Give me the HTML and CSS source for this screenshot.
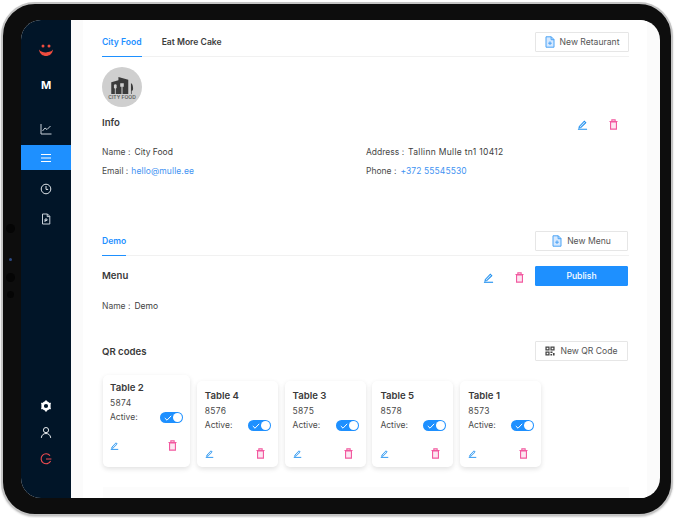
FILE: index.html
```html
<!DOCTYPE html>
<html lang="en">
<head>
    <meta charset="UTF-8" />
    <title>Restaurants</title>
    <link rel="stylesheet" href="styles.css">
</head>
<body>
<svg class="defs" width="0" height="0">
    <symbol id="i-edit" viewBox="0 0 12 12">
        <path d="M2.5 8.2 L8 2.4 L9.6 4 L4.1 9.4 L2.2 9.9 Z" fill="currentColor" fill-opacity=".18" stroke="currentColor" stroke-width="1.1"/>
        <path d="M1 11.2 H11" stroke="currentColor" stroke-width="1.2"/>
    </symbol>
    <symbol id="i-trash" viewBox="0 0 12 12">
        <path d="M2.8 3.2 H9.2 V11 H2.8 Z" fill="currentColor" fill-opacity=".15" stroke="currentColor" stroke-width="1.2"/>
        <path d="M1.6 2.8 H10.4 M4.2 2.6 V1 H7.8 V2.6" fill="none" stroke="currentColor" stroke-width="1.2"/>
    </symbol>
    <symbol id="i-file" viewBox="0 0 10 12">
        <path d="M1 .8 H6.3 L9 3.5 V11.2 H1 Z" fill="#d6e9ff" stroke="currentColor" stroke-width="1"/>
        <path d="M6.1 .8 V3.7 H9 M5 5.4 V9 M3.2 7.2 H6.8" fill="none" stroke="currentColor" stroke-width="1"/>
    </symbol>
</svg>

<div class="tablet">
    <i class="cam cam-a"></i>
    <i class="cam cam-b"></i>
    <i class="cam cam-c"></i>
    <i class="cam cam-d"></i>
    <div class="screen">
        <aside class="sidebar">
            <svg class="logo" width="16" height="14" viewBox="0 0 16 14">
                <circle cx="5" cy="2" r="1.5" fill="#ef4c3f"/>
                <circle cx="11" cy="2" r="1.5" fill="#ef4c3f"/>
                <path d="M1 5.5 C1.5 10 5 12 8 12 C11 12 14.5 10 15 5.5 C13 8 10 8.6 8 8.4 C6 8.6 3 8 1 5.5 Z" fill="#ef4c3f"/>
                <path d="M8.5 8.5 C10 8 12 7.5 12.5 8 C12.5 10 10 11.8 8.5 11 Z" fill="#ef4c3f"/>
            </svg>
            <div class="initial">M</div>
            <nav class="nav">
                <a class="nav-item">
                    <svg width="12" height="12" viewBox="0 0 12 12" fill="none" stroke="#c9d1d9" stroke-width="1">
                        <path d="M1 1 V11 H11.5"/><path d="M2.5 8 L5 5 L7 6.5 L10.5 3"/>
                    </svg>
                </a>
                <a class="nav-item active">
                    <svg width="12" height="12" viewBox="0 0 12 12" fill="none" stroke="#fff" stroke-width="1">
                        <path d="M1 2.5 H11 M1 6 H11 M1 9.5 H11"/>
                    </svg>
                </a>
                <a class="nav-item">
                    <svg width="12" height="12" viewBox="0 0 12 12" fill="none" stroke="#dfe4e8" stroke-width="1">
                        <circle cx="6" cy="6" r="4.8"/><path d="M6 3 V6.4 H8.2"/>
                    </svg>
                </a>
                <a class="nav-item">
                    <svg width="12" height="12" viewBox="0 0 12 12" fill="none" stroke="#c9d1d9" stroke-width="1">
                        <path d="M2.5 1 H7.5 L9.8 3.3 V11 H2.5 Z"/><path d="M7.2 1 V3.6 H9.8 M5 9 V6 H7 V7.5 H5"/>
                    </svg>
                </a>
            </nav>
            <div class="side-bottom">
                <svg width="12" height="12" viewBox="0 0 12 12">
                    <circle cx="6" cy="6" r="3.4" fill="none" stroke="#fff" stroke-width="2.6"/>
                    <path d="M6 .6 V2.4 M6 9.6 V11.4 M1.3 3.3 L2.9 4.2 M9.1 7.8 L10.7 8.7 M1.3 8.7 L2.9 7.8 M9.1 4.2 L10.7 3.3" stroke="#fff" stroke-width="1.8"/>
                </svg>
                <svg width="12" height="12" viewBox="0 0 12 12" fill="none" stroke="#e8ecef" stroke-width="1">
                    <circle cx="6" cy="3.1" r="2.6"/><path d="M1.3 10.9 C1.6 7.9 3.6 6.5 6 6.5 C8.4 6.5 10.4 7.9 10.7 10.9"/>
                </svg>
                <svg width="12" height="12" viewBox="0 0 12 12" fill="none" stroke="#f04c50" stroke-width="1.1">
                    <path d="M10 2.6 A5 5 0 1 0 10.6 8"/><path d="M6 6 H11.4"/>
                </svg>
            </div>
        </aside>

        <main class="main">
            <div class="panel">
                <div class="tabs">
                    <div class="tab-list">
                        <a class="tab current">City Food</a>
                        <a class="tab">Eat More Cake</a>
                    </div>
                    <button class="btn btn-wide"><svg class="btn-ico"><use href="#i-file"/></svg>New Retaurant</button>
                </div>

                <div class="avatar">
                    <svg width="24" height="17" viewBox="0 0 26 19">
                        <path d="M1 19 V6 L9 3.5 V0 L20 3 V19 Z" fill="#3b3b3b"/>
                        <path d="M23 19 V7 C24.6 7 25.4 10 25.4 13 C25.4 15 24.4 15.5 23.8 15.5 V19 Z" fill="#3b3b3b"/>
                        <rect x="4" y="8" width="3" height="5" rx="1.5" fill="#cfcfcf"/>
                        <rect x="5" y="12" width="1" height="7" fill="#cfcfcf"/>
                        <path d="M11 7 H15 V11 H13.6 V19 H12.4 V11 H11 Z" fill="#cfcfcf"/>
                    </svg>
                    <span class="avatar-name">CITY FOOD</span>
                </div>

                <div class="head head-info">
                    <h2>Info</h2>
                    <div class="actions actions-info">
                        <svg class="ico edit"><use href="#i-edit"/></svg>
                        <svg class="ico trash"><use href="#i-trash"/></svg>
                    </div>
                </div>

                <div class="info-grid">
                    <p><span class="key">Name :</span><span class="val">City Food</span></p>
                    <p><span class="key">Address :</span><span class="val tight">Tallinn Mulle tn1 10412</span></p>
                    <p><span class="key key-email">Email :</span><a class="link">hello@mulle.ee</a></p>
                    <p><span class="key">Phone :</span><a class="link">+372 55545530</a></p>
                </div>

                <div class="tabs tabs-menu">
                    <div class="tab-list">
                        <a class="tab current">Demo</a>
                    </div>
                    <button class="btn"><svg class="btn-ico"><use href="#i-file"/></svg>New Menu</button>
                </div>

                <div class="head head-menu">
                    <h2>Menu</h2>
                    <div class="menu-right">
                        <div class="actions actions-menu">
                            <svg class="ico edit"><use href="#i-edit"/></svg>
                            <svg class="ico trash"><use href="#i-trash"/></svg>
                        </div>
                        <button class="btn btn-primary">Publish</button>
                    </div>
                </div>

                <p class="menu-name"><span class="key">Name :</span><span class="val">Demo</span></p>

                <div class="head head-qr">
                    <h2>QR codes</h2>
                    <button class="btn">
                        <svg class="btn-ico qr" viewBox="0 0 12 12" fill="#444">
                            <path d="M.5 .5 H5.5 V5.5 H.5 Z M2 2 V4 H4 V2 Z M6.5 .5 H11.5 V5.5 H6.5 Z M8 2 V4 H10 V2 Z M.5 6.5 H5.5 V11.5 H.5 Z M2 8 V10 H4 V8 Z" fill-rule="evenodd"/>
                            <path d="M6.5 6.5 H9 V8.5 H6.5 Z M9.5 8.5 H11.5 V11.5 H9.5 Z M6.5 9.5 H8.5 V11.5 H6.5 Z"/>
                        </svg>
                        New QR Code
                    </button>
                </div>

                <div class="cards">
                    <div class="card card-first">
                        <h3>Table 2</h3>
                        <div class="code">5874</div>
                        <div class="active-row"><span>Active:</span><span class="switch"><svg width="8" height="6" viewBox="0 0 8 6"><path d="M.8 3 L3 5.2 L7.2 .8" fill="none" stroke="#fff"/></svg><i></i></span></div>
                        <div class="card-actions">
                            <svg class="ico-sm edit"><use href="#i-edit"/></svg>
                            <svg class="ico trash"><use href="#i-trash"/></svg>
                        </div>
                    </div>
                    <div class="card">
                        <h3>Table 4</h3>
                        <div class="code">8576</div>
                        <div class="active-row"><span>Active:</span><span class="switch"><svg width="8" height="6" viewBox="0 0 8 6"><path d="M.8 3 L3 5.2 L7.2 .8" fill="none" stroke="#fff"/></svg><i></i></span></div>
                        <div class="card-actions">
                            <svg class="ico-sm edit"><use href="#i-edit"/></svg>
                            <svg class="ico trash"><use href="#i-trash"/></svg>
                        </div>
                    </div>
                    <div class="card">
                        <h3>Table 3</h3>
                        <div class="code">5875</div>
                        <div class="active-row"><span>Active:</span><span class="switch"><svg width="8" height="6" viewBox="0 0 8 6"><path d="M.8 3 L3 5.2 L7.2 .8" fill="none" stroke="#fff"/></svg><i></i></span></div>
                        <div class="card-actions">
                            <svg class="ico-sm edit"><use href="#i-edit"/></svg>
                            <svg class="ico trash"><use href="#i-trash"/></svg>
                        </div>
                    </div>
                    <div class="card">
                        <h3>Table 5</h3>
                        <div class="code">8578</div>
                        <div class="active-row"><span>Active:</span><span class="switch"><svg width="8" height="6" viewBox="0 0 8 6"><path d="M.8 3 L3 5.2 L7.2 .8" fill="none" stroke="#fff"/></svg><i></i></span></div>
                        <div class="card-actions">
                            <svg class="ico-sm edit"><use href="#i-edit"/></svg>
                            <svg class="ico trash"><use href="#i-trash"/></svg>
                        </div>
                    </div>
                    <div class="card">
                        <h3>Table 1</h3>
                        <div class="code">8573</div>
                        <div class="active-row"><span>Active:</span><span class="switch"><svg width="8" height="6" viewBox="0 0 8 6"><path d="M.8 3 L3 5.2 L7.2 .8" fill="none" stroke="#fff"/></svg><i></i></span></div>
                        <div class="card-actions">
                            <svg class="ico-sm edit"><use href="#i-edit"/></svg>
                            <svg class="ico trash"><use href="#i-trash"/></svg>
                        </div>
                    </div>
                </div>

                <div class="next-panel"></div>
            </div>
        </main>
    </div>
</div>
</body>
</html>
```

FILE: styles.css
```css
/* Base */
* {
    box-sizing: border-box;
}
body {
    margin: 0;
    width: 676px;
    height: 518px;
    overflow: hidden;
    background: #fff;
    font-family: Inter, "Noto Sans", sans-serif;
    color: #3d3d3d;
    padding: 2px 3px 2px 1px;
}
.defs {
    position: absolute;
}
h2, h3, p {
    margin: 0;
}

/* Device frame */
.tablet {
    position: relative;
    width: 672px;
    height: 514px;
    border-radius: 34px;
    background: #0d0d0d;
    border: 2px solid #c4c4c4;
    padding: 16px 11px 16px 18px;
    box-shadow: 0 1px 2px rgba(0,0,0,0.2);
}
.cam {
    position: absolute;
    left: 3px;
    width: 9px;
    height: 9px;
    border-radius: 50%;
    background: #050505;
}
.cam-a { top: 220px; }
.cam-b { top: 269px; }
.cam-c { top: 287px; width: 7px; height: 7px; left: 4px; }
.cam-d { top: 254px; width: 3px; height: 3px; left: 6px; background: #2c4a86; }
.screen {
    display: flex;
    height: 100%;
    background: #fbfbfb;
    border-radius: 20px;
    overflow: hidden;
}

/* Sidebar */
.sidebar {
    width: 50px;
    flex: none;
    background: #011528;
    display: flex;
    flex-direction: column;
    align-items: center;
    padding-top: 24px;
    padding-bottom: 33px;
}
.logo {
    display: block;
}
.initial {
    margin-top: 20px;
    font-size: 11px;
    font-weight: 700;
    line-height: 14px;
    color: #fff;
}
.nav {
    width: 100%;
    margin-top: 22px;
    display: flex;
    flex-direction: column;
}
.nav-item {
    height: 30px;
    display: flex;
    align-items: center;
    justify-content: center;
}
.nav-item.active {
    height: 25px;
    margin: 1px 0 4px;
    background: #1e90ff;
}
.side-bottom {
    margin-top: auto;
    display: flex;
    flex-direction: column;
    gap: 14.5px;
}
.side-bottom svg {
    display: block;
}

/* Content */
.main {
    flex: 1;
    padding: 0 13px 0 12px;
    min-width: 0;
}
.panel {
    height: 100%;
    background: #fff;
    padding: 0 18px 0 19px;
    overflow: hidden;
}
.tabs {
    display: flex;
    justify-content: space-between;
    align-items: flex-start;
    height: 37px;
    padding-top: 12px;
    border-bottom: 1px solid #f1f1f1;
}
.tab-list {
    display: flex;
    gap: 20px;
}
.tab {
    height: 25px;
    padding-top: 4px;
    font-size: 8.6px;
    font-weight: 600;
    line-height: 12px;
    color: #3d3d3d;
}
.tab.current {
    color: #1e90ff;
    border-bottom: 1.5px solid #1e90ff;
}
.btn {
    width: 93px;
    height: 20px;
    border: 1px solid #e6e6e6;
    border-radius: 1px;
    background: #fff;
    font: 400 8.6px Inter, sans-serif;
    color: #555;
    display: flex;
    align-items: center;
    justify-content: center;
    gap: 5px;
    padding: 0;
}
.btn-wide {
    width: 94px;
}
.btn-ico {
    width: 10px;
    height: 12px;
    color: #4aa3f5;
}
.btn-ico.qr {
    width: 10px;
    height: 10px;
}
.btn-primary {
    background: #1e90ff;
    border-color: #1e90ff;
    color: #fff;
    font-weight: 500;
}
.avatar {
    width: 40px;
    height: 40px;
    margin-top: 10px;
    border-radius: 50%;
    background: #cfcfcf;
    display: flex;
    flex-direction: column;
    align-items: center;
    justify-content: center;
    padding-top: 3px;
    gap: 1px;
}
.avatar-name {
    font-size: 5px;
    font-weight: 600;
    line-height: 5px;
    color: #5a5a5a;
    white-space: nowrap;
}
.head {
    display: flex;
    justify-content: space-between;
    align-items: center;
}
h2 {
    font-size: 9.6px;
    font-weight: 600;
    line-height: 14px;
    color: #3a3a3a;
}
.head-info {
    margin-top: 9px;
    height: 14px;
}
.actions {
    display: flex;
}
.actions-info {
    gap: 20px;
    margin: 3px 10px 0 0;
}
.ico {
    width: 11px;
    height: 11px;
    display: block;
}
.ico-sm {
    width: 9px;
    height: 9px;
    display: block;
}
.edit {
    color: #1e8fef;
}
.trash {
    color: #f2589f;
}
.info-grid {
    margin-top: 16px;
    display: grid;
    grid-template-columns: 264px 1fr;
    row-gap: 7px;
    font-size: 8.5px;
    line-height: 12px;
}
.key {
    color: #4a4a4a;
    margin-right: 4px;
}
.key-email {
    margin-right: 3px;
}
.val {
    color: #3d3d3d;
}
.tight {
    letter-spacing: 0.3px;
}
.link {
    color: #3f93f2;
    letter-spacing: 0.1px;
}
.tabs-menu {
    margin-top: 54px;
    padding-top: 0;
    height: 25px;
}
.tabs-menu .tab {
    height: 25px;
    padding-top: 4px;
}
.tabs-menu .btn {
    margin-right: 1px;
}
.head-menu {
    margin-top: 10px;
    height: 20px;
    padding-right: 1px;
}
.menu-right {
    display: flex;
    align-items: center;
}
.actions-menu {
    gap: 20px;
    margin: 3px 10px 0 0;
}
.menu-name {
    margin-top: 14px;
    font-size: 8.5px;
    line-height: 12px;
}
.head-qr {
    margin-top: 29px;
    height: 20px;
    padding-right: 1px;
}
.head-qr h2 {
    margin-top: 2px;
}

/* QR cards */
.cards {
    margin-top: 14px;
    display: flex;
    align-items: flex-end;
    gap: 6.8px;
    padding-left: 1px;
}
.card {
    width: 81px;
    height: 86px;
    padding: 8px 7px 0 8px;
    background: #fff;
    border-radius: 5px;
    box-shadow: 0 2px 5px rgba(0,0,0,0.12);
    display: flex;
    flex-direction: column;
}
.card-first {
    width: 87px;
    height: 92px;
    padding: 6px 7px 0;
}
h3 {
    font-size: 9.6px;
    font-weight: 600;
    line-height: 14px;
    color: #3a3a3a;
}
.code {
    font-size: 8.5px;
    line-height: 12px;
    letter-spacing: 0.3px;
    color: #4a4a4a;
    margin-top: 2px;
}
.active-row {
    display: flex;
    justify-content: space-between;
    align-items: center;
    font-size: 8.5px;
    line-height: 12px;
    color: #4a4a4a;
    margin-top: 1px;
}
.switch {
    width: 23px;
    height: 11px;
    border-radius: 6px;
    background: #1e90ff;
    display: flex;
    align-items: center;
    justify-content: space-between;
    padding: 0 1px 0 4px;
    margin-top: 2px;
}
.switch i {
    width: 9px;
    height: 9px;
    border-radius: 50%;
    background: #fff;
}
.card-actions {
    display: flex;
    justify-content: space-between;
    align-items: center;
    margin-top: 17px;
    padding-right: 5px;
}
.next-panel {
    margin-top: 20px;
    margin-left: 1px;
    height: 30px;
    background: #fcfcfc;
}
```
